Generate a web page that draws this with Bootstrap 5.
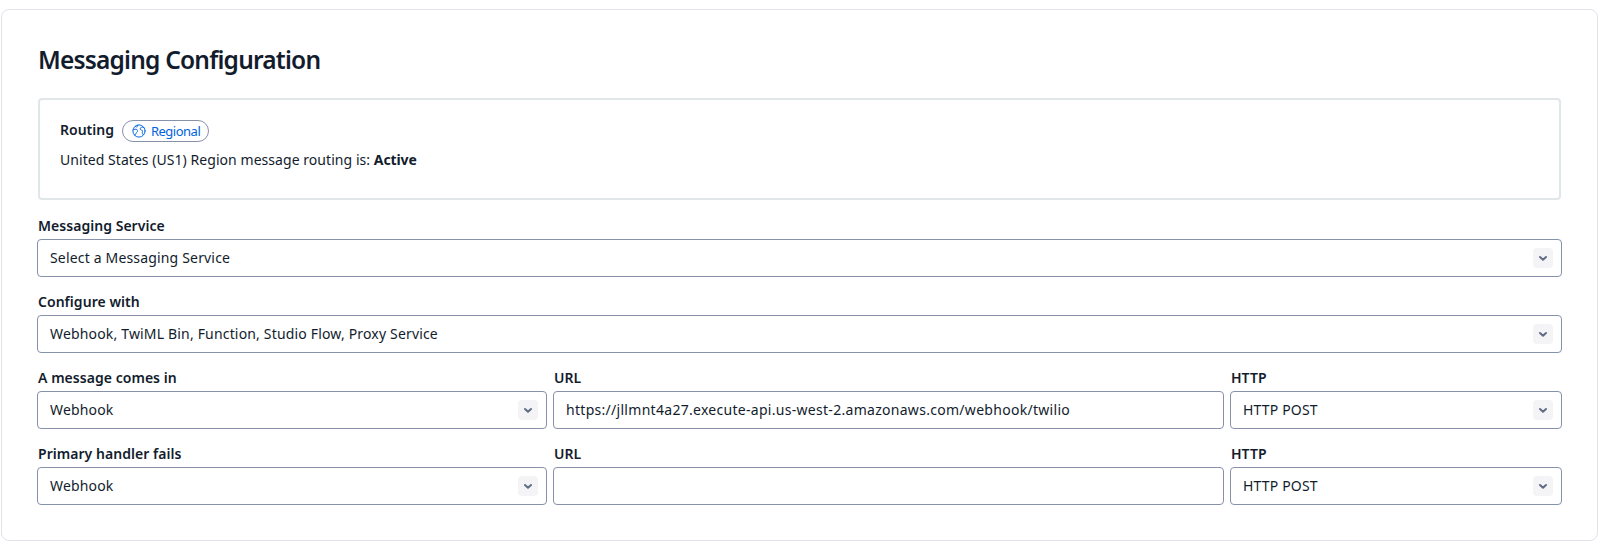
<!DOCTYPE html>
<html lang="en">
<head>
<meta charset="utf-8">
<meta name="viewport" content="width=device-width, initial-scale=1">
<title>Messaging Configuration</title>
<link rel="stylesheet" href="https://cdn.jsdelivr.net/npm/bootstrap@5.3.0/dist/css/bootstrap.min.css">
<script src="https://cdn.jsdelivr.net/npm/bootstrap@5.3.0/dist/js/bootstrap.bundle.min.js"></script>
<style>
body{font-family:"Noto Sans","Open Sans",sans-serif;font-size:14px;line-height:20px;color:#121c2d;background:#fff}
.config-card{margin:9px 11px 0 1px;height:532px;border:1px solid #e1e3ea;border-radius:8px;padding:34px 35px 0}
.config-title{font-size:24.5px;font-weight:600;line-height:32px;letter-spacing:-.8px;margin:0 0 22px 1px}
.routing-box{height:102px;margin:0 1px 16px;border:2px solid #e1e6e9;border-radius:4px;padding:20px 20px 0}
.routing-name{font-weight:600;margin:-2px 8px 0 0}
.region-pill{height:22px;width:87px;padding-left:8px;border:1px solid #8891aa;color:#0263e0;font-size:13px;line-height:18px;letter-spacing:-.5px}
.region-pill span{margin-top:-1px}
.routing-status{letter-spacing:.05px}
.routing-status b{font-weight:700;letter-spacing:-.1px}
.field-grid{display:grid;grid-template-columns:510px 671px 332px;column-gap:6px}
.field-label{display:block;font-weight:600;line-height:20px;letter-spacing:.04px;margin:0 0 3px 1px}
.field-box{height:38px;border:1px solid #8891aa;border-radius:4px;padding:0 8px 0 12px;margin-bottom:15px;letter-spacing:.17px;color:#121c2d}
.field-box.url-box{letter-spacing:.29px}
.toggle-chip{width:20px;height:20px;border-radius:4px;background:#f4f4f6}
</style>
</head>
<body>
<main class="config-card">
  <h1 class="config-title">Messaging Configuration</h1>
  <section class="routing-box">
    <div class="d-flex align-items-center">
      <span class="routing-name">Routing</span>
      <span class="region-pill rounded-pill d-inline-flex align-items-center">
        <svg class="me-1" width="16" height="16" viewBox="0 0 16 16" fill="none" stroke="#0263e0" stroke-width=".95" stroke-linejoin="round" stroke-linecap="round"><circle cx="8" cy="8" r="6.1"/><path d="M2.1 6.8c1-.7 2.900-1 3.900-.1 1 1 .5 2.200-.4 2.800-.8.500-.4 1.300-.9 1.900-.3.400-.7.600-1.200.7M4.300 3.300c.5 1 1.700.9 2.200.1l.2-1.200M13.200 4.800c-1-.9-2.900-1-3.700.1-.7 1.100 0 2.200 1.200 2.300 1.100.1.900 1 .7 1.900-.2.900.1 1.900.7 2.600"/></svg>
        <span>Regional</span>
      </span>
    </div>
    <div class="routing-status mt-2">United States (US1) Region message routing is: <b>Active</b></div>
  </section>
  <div>
    <label class="field-label">Messaging Service</label>
    <div class="field-box d-flex align-items-center justify-content-between" role="combobox">
      <span>Select a Messaging Service</span>
      <span class="toggle-chip"><svg class="d-block" width="20" height="20" viewBox="0 0 20 20" fill="none" stroke="#606b85" stroke-width="2" stroke-linecap="round" stroke-linejoin="round"><path d="M7 9l3 2.700L13 9"/></svg></span>
    </div>
  </div>
  <div>
    <label class="field-label">Configure with</label>
    <div class="field-box d-flex align-items-center justify-content-between" role="combobox">
      <span>Webhook, TwiML Bin, Function, Studio Flow, Proxy Service</span>
      <span class="toggle-chip"><svg class="d-block" width="20" height="20" viewBox="0 0 20 20" fill="none" stroke="#606b85" stroke-width="2" stroke-linecap="round" stroke-linejoin="round"><path d="M7 9l3 2.700L13 9"/></svg></span>
    </div>
  </div>
  <div class="field-grid">
    <div>
      <label class="field-label">A message comes in</label>
      <div class="field-box d-flex align-items-center justify-content-between" role="combobox">
        <span>Webhook</span>
        <span class="toggle-chip"><svg class="d-block" width="20" height="20" viewBox="0 0 20 20" fill="none" stroke="#606b85" stroke-width="2" stroke-linecap="round" stroke-linejoin="round"><path d="M7 9l3 2.700L13 9"/></svg></span>
      </div>
    </div>
    <div>
      <label class="field-label">URL</label>
      <div class="field-box url-box d-flex align-items-center">https://jllmnt4a27.execute-api.us-west-2.amazonaws.com/webhook/twilio</div>
    </div>
    <div>
      <label class="field-label">HTTP</label>
      <div class="field-box d-flex align-items-center justify-content-between" role="combobox">
        <span>HTTP POST</span>
        <span class="toggle-chip"><svg class="d-block" width="20" height="20" viewBox="0 0 20 20" fill="none" stroke="#606b85" stroke-width="2" stroke-linecap="round" stroke-linejoin="round"><path d="M7 9l3 2.700L13 9"/></svg></span>
      </div>
    </div>
    <div>
      <label class="field-label">Primary handler fails</label>
      <div class="field-box d-flex align-items-center justify-content-between" role="combobox">
        <span>Webhook</span>
        <span class="toggle-chip"><svg class="d-block" width="20" height="20" viewBox="0 0 20 20" fill="none" stroke="#606b85" stroke-width="2" stroke-linecap="round" stroke-linejoin="round"><path d="M7 9l3 2.700L13 9"/></svg></span>
      </div>
    </div>
    <div>
      <label class="field-label">URL</label>
      <div class="field-box url-box"></div>
    </div>
    <div>
      <label class="field-label">HTTP</label>
      <div class="field-box d-flex align-items-center justify-content-between" role="combobox">
        <span>HTTP POST</span>
        <span class="toggle-chip"><svg class="d-block" width="20" height="20" viewBox="0 0 20 20" fill="none" stroke="#606b85" stroke-width="2" stroke-linecap="round" stroke-linejoin="round"><path d="M7 9l3 2.700L13 9"/></svg></span>
      </div>
    </div>
  </div>
</main>
</body>
</html>
